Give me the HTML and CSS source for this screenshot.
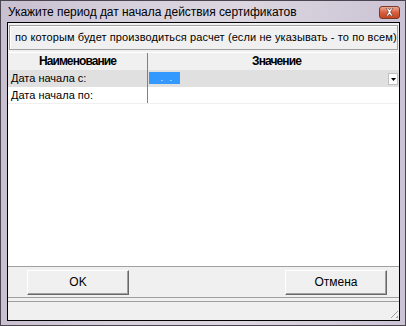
FILE: index.html
```html
<!DOCTYPE html>
<html>
<head>
<meta charset="utf-8">
<link rel="stylesheet" href="styles.css">
</head>
<body>
<div class="window">
  <div class="titlebar">
    <span class="title">Укажите период дат начала действия сертификатов</span>
    <span class="close"><svg width="9" height="8" viewBox="0 0 9 8"><path d="M1 0h2l1.5 2 1.5-2h2l-2.5 4 2.5 4h-2l-1.5-2-1.5 2h-2l2.5-4z" fill="#fff" stroke="#5a2a20" stroke-width="0.6"/></svg></span>
  </div>
  <div class="client">
    <div class="hint">по которым будет производиться расчет (если не указывать - то по всем)</div>
    <div class="grid">
      <div class="row head">
        <div class="c1">Наименование</div>
        <div class="c2">Значение</div>
      </div>
      <div class="row sel">
        <div class="c1">Дата начала с:</div>
        <div class="c2"><span class="editor">&nbsp;.&nbsp;.</span><span class="drop"><svg width="5" height="3" viewBox="0 0 5 3"><path d="M0 0h5L2.5 3z" fill="#000"/></svg></span></div>
      </div>
      <div class="row">
        <div class="c1">Дата начала по:</div>
        <div class="c2"></div>
      </div>
    </div>
    <div class="buttons">
      <button class="btn">OK</button>
      <button class="btn">Отмена</button>
    </div>
    <div class="status"><span class="grip"></span></div>
  </div>
</div>
</body>
</html>
```
FILE: styles.css
```css
* { box-sizing: border-box; }
body { margin: 0; background: #fff; font-family: "Liberation Sans", Arial, sans-serif; }
.window {
  width: 406px; height: 326px;
  border: 1px solid #4a4650;
  background: linear-gradient(90deg, #c8bfd0 0%, #d6d0dc 30%, #dcd6e0 60%, #cbc3d4 100%);
  display: flex; flex-direction: column;
}
.titlebar {
  height: 21px; display: flex; align-items: center; justify-content: space-between;
  padding: 0 5px 0 7px;
}
.title { font-size: 12px; color: #000; letter-spacing: -0.05px; }
.close {
  width: 21px; height: 13px; margin-top: 1px;
  background: linear-gradient(#eea894, #d8603e 50%, #c4441f);
  border: 1px solid #7a3a2a; border-radius: 3px;
  display: flex; align-items: center; justify-content: center;
}
.client {
  flex: 1; margin: 0 5px 4px 6px;
  border: 1px solid #000;
  background: #f0f0f0;
  display: flex; flex-direction: column;
  padding: 2px 0 1px 0;
}
.hint {
  height: 25px; margin: 0 1px 2px 1px;
  border: 1px solid #a0a0a0;
  box-shadow: inset 1px 1px 0 #fff;
  font-size: 11px; letter-spacing: 0.1px; padding-left: 5px; line-height: 23px; white-space: nowrap;
}
.grid { flex: 1; background: #fff; border-top: 1px solid #fff; }
.row { display: flex; height: 17px; border-bottom: 1px solid #f0f0f0; font-size: 11px; }
.row .c1 { width: 140px; border-right: 1px solid #808080; padding-left: 3px; line-height: 16px; white-space: nowrap; }
.row .c2 { flex: 1; position: relative; }
.head { background: #f0f0f0; font-weight: bold; font-size: 12px; height: 17px; border-bottom: none; letter-spacing: -0.9px; }
.head .c1, .head .c2 { text-align: center; padding-left: 0; line-height: 16px; }
.head .c2 { padding-left: 6px; }
.sel { background: #e0e0e0; height: 17px; border-bottom: none; }
.sel .c1 { line-height: 17px; }
.editor {
  position: absolute; left: 1px; top: 2px; width: 31px; height: 12px;
  background: #3399ff; border-right: 1px solid #e07020;
  color: #fff; font-size: 9px; line-height: 12px; padding-left: 7px; letter-spacing: 2px;
}
.drop {
  position: absolute; right: 1px; top: 3px; width: 10px; height: 12px;
  background: #fff; border: 1px solid #c0c0c0;
  display: flex; align-items: center; justify-content: center;
}
.buttons {
  height: 32px; border-top: 1px solid #a0a0a0; border-bottom: 1px solid #a0a0a0;
  display: flex; justify-content: space-between; align-items: center;
  padding: 0 12px 0 19px;
}
.btn {
  width: 102px; height: 25px; font-family: "Liberation Sans", Arial, sans-serif; font-size: 12px;
  background: #f0f0f0; color: #000;
  border: 1px solid; border-color: #fff #696969 #696969 #fff;
  box-shadow: inset -1px -1px 0 #a0a0a0;
  padding: 0;
}
.status {
  height: 18px; margin-top: 3px; border-top: 1px solid #a0a0a0;
  position: relative;
}
.grip {
  position: absolute; right: 1px; bottom: 1px; width: 11px; height: 11px;
  background: repeating-linear-gradient(135deg, transparent 0 2px, #a0a0a0 2px 3px, transparent 3px 4px);
  clip-path: polygon(100% 0, 100% 100%, 0 100%);
}
```
